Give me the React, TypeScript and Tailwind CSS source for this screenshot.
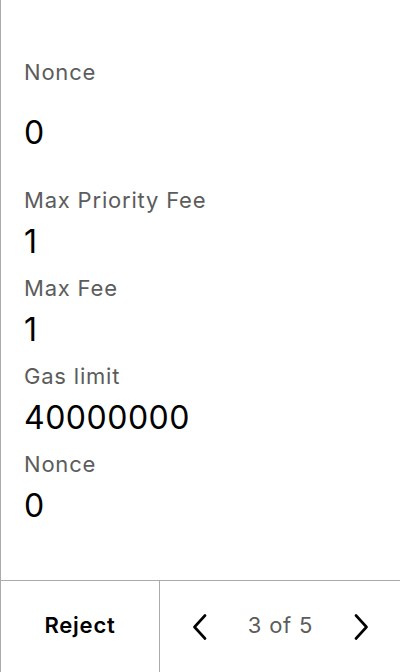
import React from "react";

const Field = ({ label, value, first }: { label: string; value: string; first?: boolean }) => (
  <div className="flex flex-col">
    <div className="text-[22px] leading-7 tracking-[0.8px] text-[#5c5c5c]">{label}</div>
    <div className={`text-[32px] leading-10 tracking-[0.5px] text-black ${first ? "mt-[27px]" : "mt-2"}`}>{value}</div>
  </div>
);

export default function App() {
  return (
    <div
      className="w-[400px] h-[672px] flex flex-col bg-white border-l border-[#ababab]"
      style={{ fontFamily: "Inter, 'Noto Sans', sans-serif" }}
    >
      <div className="flex-1 flex flex-col pl-[23px] pt-[58px]">
        <div className="mb-[33px]">
          <Field label="Nonce" value="0" first />
        </div>
        <div className="flex flex-col gap-3">
          <Field label="Max Priority Fee" value="1" />
          <Field label="Max Fee" value="1" />
          <Field label="Gas limit" value="40000000" />
          <Field label="Nonce" value="0" />
        </div>
      </div>
      <div className="h-[92px] flex border-t border-[#ababab]">
        <button className="w-[159px] h-full flex items-center justify-center border-r border-[#ababab] text-[22px] tracking-[0.8px] font-semibold text-black pb-[2px]">
          Reject
        </button>
        <div className="flex-1 flex items-center justify-between pl-[32px] pr-[31px]">
          <svg width="16" height="26" viewBox="0 0 16 26" fill="none">
            <path d="M13 1.5 L2.5 13 L13 24.5" stroke="black" strokeWidth="2.6" strokeLinecap="round" strokeLinejoin="round" />
          </svg>
          <span className="text-[22px] tracking-[0.8px] text-[#5c5c5c] pb-[2px]">3 of 5</span>
          <svg width="16" height="26" viewBox="0 0 16 26" fill="none">
            <path d="M3 1.5 L13.5 13 L3 24.5" stroke="black" strokeWidth="2.6" strokeLinecap="round" strokeLinejoin="round" />
          </svg>
        </div>
      </div>
    </div>
  );
}
